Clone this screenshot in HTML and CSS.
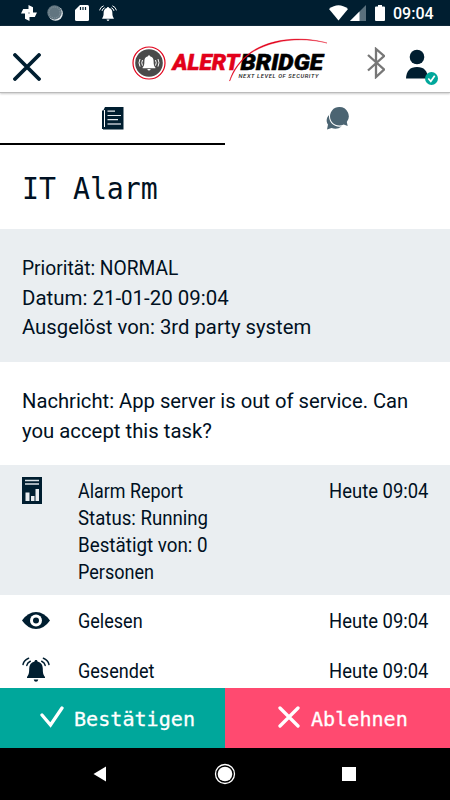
FILE: index.html
```html
<!DOCTYPE html>
<html lang="de">
<head>
<meta charset="utf-8">
<title>Alertbridge</title>
<link rel="stylesheet" href="styles.css">
</head>
<body>
<svg width="0" height="0" class="defs">
  <symbol id="bell" viewBox="0 0 28 26">
    <path fill="currentColor" d="M14 3c1 0 1.500.7 1.500 1.600 3.600.8 5.300 3.600 5.300 7.200 0 4.700.7 6.500 2.200 8.200v1H5v-1c1.500-1.700 2.200-3.500 2.200-8.200 0-3.600 1.700-6.400 5.300-7.200C12.500 3.700 13 3 14 3zM11.700 22.500h4.600q-.5 2.300-2.300 2.300t-2.300-2.300z"/>
    <path fill="none" stroke="currentColor" stroke-width="1.500" stroke-linecap="round" d="M8.300 4.200Q5.300 5.500 4.800 8.400M6.600 1.200Q2 3 1 7.500M19.700 4.200Q22.700 5.500 23.200 8.400M21.400 1.200Q26 3 27 7.500"/>
  </symbol>
</svg>
<div class="screen">
  <header class="status">
    <div class="status-left">
      <svg width="16" height="16" viewBox="0 0 16 16" fill="#fff"><path d="M7.500 7.500V0l4.500 2.200v5.300zM8.500 7.500H16L13.800 12H8.500zM8.500 8.500V16L4 13.800V8.500zM7.500 8.500H0L2.200 4h5.300z"/></svg>
      <svg width="16" height="16" viewBox="0 0 16 16"><circle cx="8.500" cy="8.500" r="7.300" fill="#e8edf0"/><circle cx="7.500" cy="7.500" r="7.200" fill="#617580"/><circle cx="7.500" cy="7.500" r="5.500" fill="none" stroke="#8c9ba4" stroke-dasharray="1 1"/></svg>
      <svg width="14" height="16" viewBox="0 0 14 16"><path d="M5 0h7.500q1.500 0 1.500 1.500v13q0 1.500-1.500 1.500h-11Q0 16 0 14.500V5z" fill="#fff"/><path d="M5.500 2v3M8 2v3M10.500 2v3" stroke="#001e2f" stroke-width="1.200"/></svg>
      <svg class="white" width="18" height="17"><use href="#bell"/></svg>
    </div>
    <div class="status-right">
      <svg width="19" height="16" viewBox="0 0 19 16"><path d="M0 4Q9.500-3.500 19 4L9.500 15.500z" fill="#fff"/></svg>
      <svg width="16" height="16" viewBox="0 0 16 16"><path d="M0 16 16 0v16z" fill="#5a707d"/><path d="M0 16 9.500 6.500V16z" fill="#fff"/></svg>
      <svg width="10" height="16" viewBox="0 0 10 16"><path d="M3 0h4v1.500h2q1 0 1 1V15q0 1-1 1H1q-1 0-1-1V2.500q0-1 1-1h2z" fill="#fff"/></svg>
      <span>09:04</span>
    </div>
  </header>

  <div class="appbar">
    <svg width="28" height="28" viewBox="0 0 28 28"><path d="M2 2 26 26M26 2 2 26" stroke="#001e30" stroke-width="3.800" stroke-linecap="round"/></svg>
    <svg class="logo" width="196" height="46" viewBox="132 37 196 46">
      <circle cx="149" cy="63" r="16" fill="#fff" stroke="#e2001a" stroke-width="1.200"/>
      <circle cx="149" cy="63" r="13.800" fill="#4a4a4a"/>
      <path fill="#fff" d="M149 55.200q1 0 1 1.100c2.800.6 3.600 2.700 3.600 5 0 3.500.5 5 1.800 6.200v.7h-12.800v-.7c1.300-1.200 1.800-2.700 1.800-6.200 0-2.300.8-4.400 3.600-5q0-1.100 1-1.100zM147.300 69h3.400q-.4 1.600-1.700 1.600t-1.700-1.600z"/>
      <path fill="none" stroke="#fff" d="M142.500 60q-1.500 2.800 0 5.600M140 59q-2 3.800 0 7.600M155.500 60q1.500 2.800 0 5.600M158 59q2 3.800 0 7.600"/>
      <text class="brand red" x="172.500" y="70" textLength="67" lengthAdjust="spacingAndGlyphs">ALERT</text>
      <text class="brand" x="240.500" y="70" textLength="82.500" lengthAdjust="spacingAndGlyphs">BRIDGE</text>
      <path d="M229.500 81C233 70 239 61 251 52C270 39 300 35.500 327 43C300 36.500 272 40 251.500 52.700C240 61 234 70 229.800 81z" fill="#e2001a" stroke="#e2001a" stroke-width=".4"/>
      <text class="tagline" x="238.500" y="78" textLength="80">NEXT LEVEL OF SECURITY</text>
    </svg>
    <svg class="bluetooth" width="18" height="32" viewBox="0 0 18 32"><path d="M1 8 17 22.500 9 30V2l8 7L1 23.500" fill="none" stroke="#777" stroke-width="2.300"/></svg>
    <svg class="person" width="34" height="37" viewBox="0 0 34 37"><circle cx="12" cy="8" r="7.300" fill="#001e30"/><path d="M1 29.500Q1.500 18 12 18t11 11.500z" fill="#001e30"/><circle cx="26.500" cy="29.500" r="6.500" fill="#00a79b"/><path d="m23.300 29.500 2.500 2.800 3.900-5.500" fill="none" stroke="#fff" stroke-width="1.700"/></svg>
  </div>

  <nav class="tabs">
    <div class="tab active"><svg width="22" height="23" viewBox="0 0 22 23"><path d="M3 0h18.500v22.500H1V4" fill="#001e30"/><path d="M.5 3.500V22" stroke="#001e30"/><path d="M2.500 3v17" stroke="#fff" stroke-width="1"/><path d="M5.500 4.200H13M5.500 8.500H19M5.500 12.700H16" stroke="#e6ebee" stroke-width="1.200"/><path d="M5.500 17H19" stroke="#8d9aa5" stroke-width="2"/></svg></div>
    <div class="tab"><svg width="23" height="23" viewBox="0 0 23 23"><path d="M4 7C-.5 11 .3 15.500 2 17.500L1 22.500l4.500-1.600Q11 23 15.500 19.500z" fill="#4b6472"/><path d="M13.500 0a9.300 9.300 0 0 1 7.300 15l.9 4-4-1.500A9.300 9.300 0 1 1 13.500 0z" fill="#4b6472" stroke="#fff" stroke-width="2" paint-order="stroke"/></svg></div>
  </nav>

  <main>
    <h1><span>IT Alarm</span></h1>
    <section class="details">
      <p><span class="w1">Priorität: NORMAL</span></p>
      <p><span class="w2">Datum: 21-01-20 09:04</span></p>
      <p><span class="w3">Ausgelöst von: 3rd party system</span></p>
    </section>
    <section class="message">
      <p><span class="w4">Nachricht: App server is out of service. Can</span></p>
      <p><span class="w5">you accept this task?</span></p>
    </section>
    <section class="row report">
      <svg width="20" height="27" viewBox="0 0 20 27"><path d="M0 0h20v27H0z" fill="#001e30"/><path d="M3 3.500h14M3 7h14" stroke="#dce2e6" stroke-width="1.500"/><path d="M3.500 15.500h4v8.500h-4zM9 19h3.500v5H9zM13.500 12h3.500v12h-3.500z" fill="#e9edf0"/></svg>
      <div class="label"><p><span class="w6">Alarm Report</span></p><p><span class="w7">Status: Running</span></p><p><span class="w8">Bestätigt von: 0</span></p><p><span class="w9">Personen</span></p></div>
      <time><span>Heute 09:04</span></time>
    </section>
    <section class="row">
      <svg class="eye" width="28" height="17" viewBox="0 0 28 17"><path d="M0 8.500Q6 0 14 0t14 8.500Q22 17 14 17T0 8.500z" fill="#001e30"/><circle cx="14" cy="8.500" r="6" fill="#fff"/><circle cx="14" cy="8.500" r="3" fill="#001e30"/></svg>
      <div class="label"><p><span class="w10">Gelesen</span></p></div>
      <time><span>Heute 09:04</span></time>
    </section>
    <section class="row">
      <svg class="sent" width="28" height="26"><use href="#bell"/></svg>
      <div class="label"><p><span class="w11">Gesendet</span></p></div>
      <time><span>Heute 09:04</span></time>
    </section>
  </main>

  <div class="actions">
    <button class="accept"><svg width="24" height="22" viewBox="0 0 24 22"><path d="m2 9 8.500 10L22 2" fill="none" stroke="#fff" stroke-width="3.300" stroke-linecap="round"/></svg><span>Bestätigen</span></button>
    <button class="reject"><svg width="22" height="22" viewBox="0 0 22 22"><path d="m2 2 18 18M20 2 2 20" stroke="#fff" stroke-width="3.300" stroke-linecap="round"/></svg><span>Ablehnen</span></button>
  </div>
  <footer class="navbar">
    <svg width="14" height="16" viewBox="0 0 14 16"><path d="M13 .5v15L.5 8z" fill="#fff"/></svg>
    <svg width="22" height="22" viewBox="0 0 22 22"><circle cx="11" cy="11" r="9.500" fill="none" stroke="#fff" stroke-width="1.300"/><circle cx="11" cy="11" r="7.300" fill="#fff"/></svg>
    <svg width="14" height="14"><rect width="14" height="14" fill="#fff"/></svg>
  </footer>
</div>
</body>
</html>
```
FILE: styles.css
```css
* { box-sizing: border-box; }
body { margin: 0; font-family: Roboto, "Liberation Sans", sans-serif; color: #001022; }
p, h1 { margin: 0; }
svg { display: block; flex: none; }
.defs { display: none; }
.screen { width: 450px; height: 800px; display: flex; flex-direction: column; overflow: hidden; background: #fff; }
.status { flex: none; height: 26px; background: #001e30; display: flex; justify-content: space-between; padding: 5px 17px 0 21px; }
.status-left { display: flex; gap: 11px; }
.status-left svg:nth-child(1) { margin-right: -1px; }
.status-left svg:nth-child(3) { margin-left: 1px; }
.white { color: #fff; margin-left: -1px; }
.status-right { display: flex; color: #fff; font-size: 16px; line-height: 18px; font-weight: 500; }
.status-right svg:nth-child(2) { margin-left: 2px; }
.status-right svg:nth-child(3) { margin-left: 9px; }
.status-right span { width: 40px; margin-left: 8px; }
.appbar { flex: none; height: 67px; display: flex; align-items: flex-start; padding: 0 10px 0 13px; border-bottom: 1px solid #bbb; box-shadow: 0 1px 2px #ccc; }
.appbar > svg:first-child { margin-top: 27px; }
.logo { margin: 11px 0 0 91px; }
.brand { font: italic 900 21.500px Roboto, sans-serif; fill: #000; stroke: #000; stroke-width: .5px; }
.red { fill: #e2001a; stroke: #e2001a; }
.tagline { font: italic 500 5.800px Roboto, sans-serif; fill: #222; }
.bluetooth { margin: 21px 0 0 39px; }
.person { margin: 23px 0 0 20px; }
.tabs { flex: none; height: 52px; display: flex; }
.tab { width: 225px; display: flex; justify-content: center; padding-top: 14px; }
.tab.active { border-bottom: 2px solid #000; }
main { flex: 1; min-height: 0; overflow: hidden; }
h1 { height: 84px; padding: 25px 0 0 22px; font: 28.200px/40px "DejaVu Sans Mono", monospace; }
main span { display: inline-block; white-space: nowrap; transform-origin: left center; }
h1 span { transform: scaleY(1.040); }
.details { height: 133px; padding: 25px 22px; background: #eaeef1; font-size: 20px; line-height: 29.500px; }
.message { height: 103px; padding: 24px 22px; font-size: 20px; line-height: 30px; }
.row { display: flex; height: 50px; padding: 12px 22px 0; font-size: 19px; line-height: 27px; }
.row.report { height: 130px; background: #eaeef1; }
.label { margin-left: 36px; flex: 1; }
.label, time { padding-top: 1px; }
.w1 { transform: scale(.960, 1.050); }
.w2 { transform: scale(1.022, 1.050); }
.w3 { transform: scale(1.014, 1.050); }
.w4 { transform: scale(1.010, 1.050); }
.w5 { transform: scale(1.016, 1.050); }
.w6 { transform: scale(.942, 1.060); }
.w7 { transform: scale(.981, 1.060); }
.w8 { transform: scale(.989, 1.060); }
.w9 { transform: scale(.950, 1.060); }
.w10 { transform: scale(.949, 1.060); }
.w11 { transform: scale(.950, 1.060); }
main time span { transform: scale(.970, 1.060); transform-origin: right center; }
.row .eye, .row .sent { margin-right: -8px; }
.row .eye { margin-top: 5px; }
.row .sent, .row .eye { color: #001e30; }
.actions { flex: none; height: 60px; display: flex; }
button { width: 225px; border: 0; display: flex; align-items: center; color: #fff; font: 20.100px "DejaVu Sans Mono", monospace; padding: 0; -webkit-text-stroke: .3px #fff; }
button span { padding-top: 1px; }
button svg { margin-top: -2px; }
.accept { background: #00a79b; padding-left: 40px; gap: 10px; }
.reject { background: #ff4a70; padding-left: 53px; gap: 11px; }
.navbar { flex: none; height: 52px; background: #000; display: grid; grid-template-columns: 200px 50px 200px; align-items: center; }
.navbar svg:nth-child(1) { margin-left: 93px; }
.navbar svg:nth-child(2) { margin-left: 14px; }
.navbar svg:nth-child(3) { margin-left: 92px; }
```
